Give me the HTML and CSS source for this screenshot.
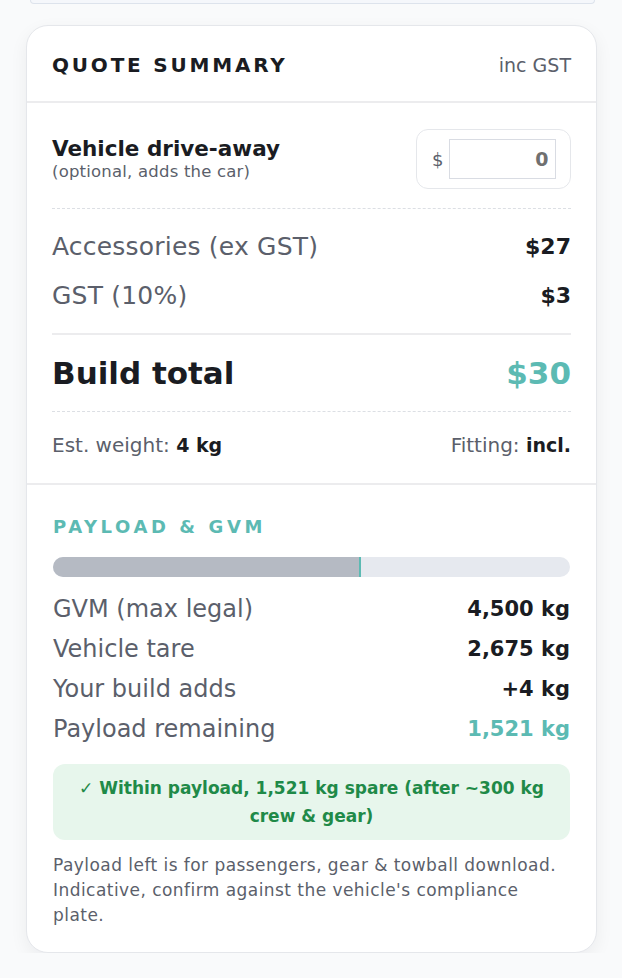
FILE: index.html
```html
<!DOCTYPE html>
<html lang="en">
<head>
  <meta charset="UTF-8" />
  <meta name="viewport" content="width=device-width, initial-scale=1.0" />
  <title>Quote summary</title>
  <link rel="stylesheet" href="styles.css">
</head>
<body>
  <!-- bottom edge of the card above -->
  <div class="prev-card"></div>

  <aside class="quote-card">
    <div class="quote-head">
      <h2>QUOTE SUMMARY</h2>
      <span class="muted">inc GST</span>
    </div>

    <section class="quote-body">
      <div class="vehicle-row">
        <div>
          <div class="vehicle-title">Vehicle drive-away</div>
          <div class="vehicle-sub">(optional, adds the car)</div>
        </div>
        <label class="money-field">
          <span>$</span>
          <input type="text" value="0">
        </label>
      </div>

      <div class="line-row first">
        <span>Accessories (ex GST)</span>
        <b>$27</b>
      </div>
      <div class="line-row">
        <span>GST (10%)</span>
        <b>$3</b>
      </div>

      <div class="total-row">
        <span>Build total</span>
        <span class="total-value">$30</span>
      </div>

      <div class="meta-row">
        <span>Est. weight: <b>4 kg</b></span>
        <span>Fitting: <b>incl.</b></span>
      </div>
    </section>

    <section class="payload">
      <h3>PAYLOAD &amp; GVM</h3>
      <div class="payload-bar">
        <div class="payload-fill" style="width: 59.6%"></div>
      </div>

      <div class="payload-rows">
        <div class="payload-row"><span>GVM (max legal)</span><b>4,500 kg</b></div>
        <div class="payload-row"><span>Vehicle tare</span><b>2,675 kg</b></div>
        <div class="payload-row"><span>Your build adds</span><b>+4 kg</b></div>
        <div class="payload-row"><span>Payload remaining</span><b class="teal">1,521 kg</b></div>
      </div>

      <div class="payload-ok">✓ Within payload, 1,521 kg spare (after ~300 kg crew &amp; gear)</div>

      <p class="payload-note">Payload left is for passengers, gear &amp; towball download. Indicative, confirm against the vehicle's compliance plate.</p>
    </section>
  </aside>
</body>
</html>
```

FILE: styles.css
```css
:root {
  --page-bg: #f9fafb;
  --card-bg: #ffffff;
  --border: #e5e7eb;
  --text: #1a1c22;
  --text-muted: #5b5f6b;
  --teal: #5cbab3;
  --green: #1f8a48;
  --green-bg: #e7f6ec;
}

* {
  box-sizing: border-box;
  margin: 0;
  padding: 0;
}

body {
  font-family: "DejaVu Sans", Inter, sans-serif;
  background-color: var(--page-bg);
  color: var(--text);
  padding: 0 25px 0 26px;
}

.prev-card {
  height: 4px;
  margin: 0 2px 0 4px;
  background-color: #f5f7fb;
  border: 1px solid #dde3ec;
  border-top: none;
  border-radius: 0 0 10px 10px;
}

.quote-card {
  margin-top: 21px;
  background-color: var(--card-bg);
  border: 1px solid var(--border);
  border-radius: 22px;
  box-shadow: 0 6px 18px rgba(17, 24, 39, 0.06);
  overflow: hidden;
}

.quote-head {
  display: flex;
  justify-content: space-between;
  align-items: center;
  height: 77px;
  padding: 3px 25px 0;
  border-bottom: 2px solid #ececee;
}

.quote-head h2 {
  font-size: 20px;
  font-weight: 800;
  letter-spacing: 2.8px;
}

.muted {
  color: var(--text-muted);
  font-size: 19px;
}

.quote-body {
  padding: 0 25px;
  border-bottom: 2px solid #ececee;
}

.vehicle-row {
  display: flex;
  justify-content: space-between;
  align-items: center;
  padding: 26px 0 19px;
  border-bottom: 1px dashed #dcdfe4;
}

.vehicle-title {
  font-size: 21.5px;
  font-weight: 700;
  line-height: 26px;
}

.vehicle-sub {
  font-size: 16.5px;
  letter-spacing: 0.2px;
  color: var(--text-muted);
  line-height: 20px;
}

.money-field {
  display: flex;
  align-items: center;
  gap: 6px;
  width: 155px;
  height: 60px;
  padding: 0 14px 0 15px;
  border: 1px solid var(--border);
  border-radius: 12px;
  color: var(--text-muted);
  font-size: 18px;
}

.money-field input {
  width: 107px;
  height: 40px;
  border: 1.5px solid #d9dce3;
  text-align: right;
  padding-right: 7px;
  font-family: inherit;
  font-size: 19px;
  font-weight: 700;
  color: #707070;
  outline: none;
}

.line-row {
  display: flex;
  justify-content: space-between;
  align-items: center;
  height: 49px;
  font-size: 25px;
  letter-spacing: 0.2px;
  color: var(--text-muted);
}

.line-row.first {
  margin-top: 13px;
}

.line-row b {
  color: var(--text);
  font-size: 22px;
  font-weight: 800;
  letter-spacing: 0;
}

.total-row {
  display: flex;
  justify-content: space-between;
  align-items: center;
  margin-top: 13px;
  height: 79px;
  border-top: 2px solid #ececee;
  border-bottom: 1px dashed #dcdfe4;
  font-size: 31px;
  font-weight: 800;
}

.total-value {
  color: var(--teal);
}

.meta-row {
  display: flex;
  justify-content: space-between;
  align-items: center;
  height: 71px;
  padding-bottom: 6px;
  font-size: 20px;
  color: var(--text-muted);
}

.meta-row b {
  color: var(--text);
  font-size: 19px;
  font-weight: 700;
}

.payload {
  padding: 31px 26px 24px 26px;
}

.payload h3 {
  color: var(--teal);
  font-size: 18px;
  font-weight: 800;
  letter-spacing: 3.6px;
  line-height: 22px;
}

.payload-bar {
  margin-top: 19px;
  height: 20px;
  border-radius: 10px;
  background-color: #e6e9ef;
  overflow: hidden;
}

.payload-fill {
  height: 100%;
  background-color: #b5bac3;
  border-right: 2px solid var(--teal);
}

.payload-rows {
  margin-top: 12px;
}

.payload-row {
  display: flex;
  justify-content: space-between;
  align-items: center;
  height: 40px;
  font-size: 24px;
  color: var(--text-muted);
}

.payload-row b {
  color: var(--text);
  font-size: 21px;
  font-weight: 800;
}

.payload-row b.teal {
  color: var(--teal);
}

.payload-ok {
  margin-top: 15px;
  padding: 10px 24px;
  background-color: var(--green-bg);
  border-radius: 12px;
  color: var(--green);
  font-size: 17px;
  font-weight: 800;
  line-height: 28px;
  text-align: center;
}

.payload-note {
  margin-top: 13px;
  font-size: 17px;
  letter-spacing: 0.45px;
  line-height: 25px;
  color: var(--text-muted);
}
```
